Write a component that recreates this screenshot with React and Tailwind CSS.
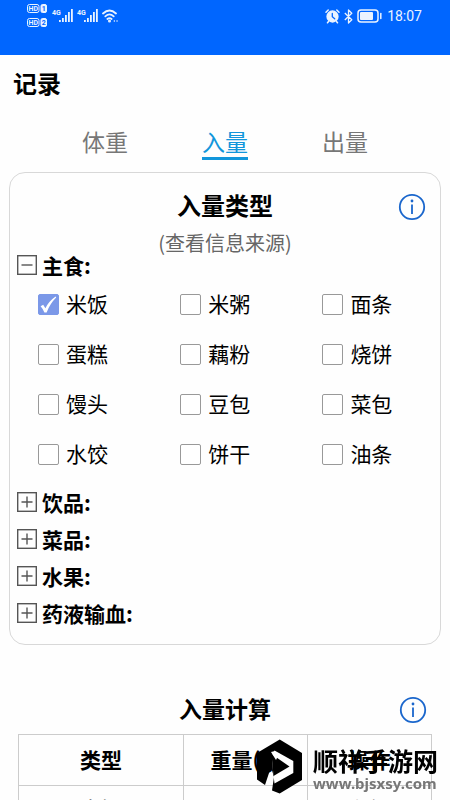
import { useState } from 'react';

const TABS = ['体重', '入量', '出量'];
const STAPLES = ['米饭', '米粥', '面条', '蛋糕', '藕粉', '烧饼', '馒头', '豆包', '菜包', '水饺', '饼干', '油条'];
const GROUPS = ['饮品', '菜品', '水果', '药液输血'];

function Signal() {
  return (
    <svg width="21" height="16" viewBox="0 0 21 16" fill="#eaf3ff">
      <text x="0" y="7" fontSize="7" fontWeight="700" fontFamily="Roboto, sans-serif">4G</text>
      <rect x="7" y="12" width="1.8" height="2" />
      <rect x="10" y="10" width="1.8" height="4" />
      <rect x="13" y="7" width="1.8" height="7" />
      <rect x="16" y="4" width="1.8" height="10" />
      <rect x="19" y="1" width="1.8" height="13" />
    </svg>
  );
}

function HdBadge({ n }) {
  return (
    <svg width="21" height="9" viewBox="0 0 21 9" fill="none" stroke="#eaf3ff" strokeWidth="1">
      <rect x="0.5" y="0.5" width="11.5" height="8" rx="2" />
      <rect x="14" y="0.5" width="5.5" height="8" rx="1.5" fill="#eaf3ff" />
      <g stroke="none" fontSize="7" fontWeight="700" fontFamily="Roboto, sans-serif">
        <text x="1.5" y="7" fill="#eaf3ff">HD</text>
        <text x="14.8" y="7" fill="#0066ff">{n}</text>
      </g>
    </svg>
  );
}

function StatusBar() {
  return (
    <header className="flex h-[55px] items-start justify-between bg-[#0066ff] pr-7 pl-[27px] text-[#eaf3ff]">
      <div className="flex items-center gap-1 pt-1">
        <div className="flex flex-col gap-[5px]">
          <HdBadge n="1" />
          <HdBadge n="2" />
        </div>
        <Signal />
        <Signal />
        <svg width="16" height="14" viewBox="0 0 16 14" fill="none" stroke="#eaf3ff" strokeWidth="1.8" strokeLinecap="round">
          <path d="M1 4.5Q7.5-1.5 14 4.5M3.3 7.3q4.2-3.8 8.4 0M5.4 10q2.1-1.8 4.2 0" />
          <circle cx="7.5" cy="12" r="0.6" fill="#eaf3ff" />
          <path d="M12.3 12h.1M15 12h.1" strokeWidth="1.4" />
        </svg>
      </div>
      <div className="flex items-center gap-1 pt-[7px]">
        <svg width="15" height="15" viewBox="0 0 15 15" fill="none" stroke="#eaf3ff" strokeWidth="1.5" strokeLinecap="round">
          <circle cx="7.5" cy="7.5" r="5.4" fill="#eaf3ff" />
          <path d="M1 3.2 3.2 1M14 3.2 11.8 1M3.5 12.5 2.5 13.8M11.5 12.5l1 1.3" />
          <path d="M7.3 4.5v3.3l2.4 2" stroke="#0066ff" strokeWidth="1.3" />
        </svg>
        <svg width="9" height="15" viewBox="0 0 9 15" fill="none" stroke="#eaf3ff" strokeWidth="1.3" strokeLinejoin="round">
          <path d="M.8 4 7.8 10.8 4.5 14V1L7.8 4.2.8 11" />
        </svg>
        <svg width="26" height="14" viewBox="0 0 26 14" fill="none" stroke="#eaf3ff" strokeWidth="1.5">
          <rect x="1" y="1" width="20" height="12" rx="3" />
          <rect x="3" y="3" width="13" height="8" rx="1" fill="#eaf3ff" stroke="none" />
          <path d="M23.8 4.5v5" strokeLinecap="round" />
        </svg>
        <span className="font-[Roboto,sans-serif] text-[14px] leading-[18px]">18:07</span>
      </div>
    </header>
  );
}

function InfoButton() {
  return (
    <button type="button" aria-label="说明" className="absolute top-0 right-0">
      <svg width="28" height="28" viewBox="0 0 28 28" fill="none" stroke="#1a66cc" strokeWidth="1.8">
        <circle cx="14" cy="14" r="12.2" />
        <path d="M14 11.5V21" />
        <circle cx="14" cy="8" r="1.4" fill="#1a66cc" stroke="none" />
      </svg>
    </button>
  );
}

function GroupToggle({ label, open, onClick }) {
  return (
    <button type="button" aria-expanded={open} onClick={onClick} className="flex h-6 items-center gap-[5px] text-[21px] leading-6 font-bold">
      <svg width="20" height="20" viewBox="0 0 20 20" fill="none" stroke="#555" strokeWidth="1.4">
        <rect x="0.7" y="0.7" width="18.6" height="18.6" />
        <path d={open ? 'M4.5 10h11' : 'M4.5 10h11M10 4.5v11'} />
      </svg>
      <span>{label}:</span>
    </button>
  );
}

function Food({ name, checked, onChange }) {
  return (
    <label className="flex h-[50px] items-center gap-[7px] text-[21px]">
      <span className="relative flex">
        <input
          type="checkbox"
          checked={checked}
          onChange={onChange}
          className="size-[21px] appearance-none rounded-[2px] border border-[#999] bg-white checked:border-[#7b98e8] checked:bg-[#7b98e8]"
        />
        {checked && (
          <svg className="pointer-events-none absolute inset-0" width="21" height="21" viewBox="0 0 21 21" fill="#fff">
            <path d="M2.6 12.3 5.2 10.8 7.4 14.2Q11 7.2 17.6 2.6L18.2 3.4Q12 9.5 8.6 18.4H6.4Q5 15 2.6 12.3Z" />
          </svg>
        )}
      </span>
      {name}
    </label>
  );
}

function Watermark() {
  return (
    <div className="fixed right-3 bottom-[6px] flex items-center gap-[10px]">
      <svg width="46" height="55" viewBox="0 0 46 55">
        <path d="M22.7.5 45 14V41L22.7 54.5 15 51.5 17 38 14 28 8 46 0 40.5V14Z" fill="#000" />
        <path d="M17.5 11.5 36.3 22V34L17.5 44.5 16 32 15 17Z" fill="#fff" />
        <path d="M14.5 15 32.5 27.5 16.5 37Z" fill="#000" />
        <path d="M14 13 18 12 20.5 18 19 21Z" fill="#fff" />
      </svg>
      <div className="pt-1">
        <div className="text-[25px] leading-[28px] font-bold">顺祥手游网</div>
        <div className="font-['Noto_Sans',sans-serif] text-[15px] leading-[18px] font-bold text-[#777]">www.bjsxsy.com</div>
      </div>
    </div>
  );
}

export default function App() {
  const [tab, setTab] = useState('入量');
  const [picked, setPicked] = useState(['米饭']);
  const [open, setOpen] = useState(['主食']);

  const flip = (list, v) => (list.includes(v) ? list.filter((x) => x !== v) : [...list, v]);

  return (
    <div className="h-screen overflow-hidden bg-[#fefefe] font-['Noto_Sans_CJK_SC',sans-serif] text-black">
      <StatusBar />
      <h1 className="px-[13px] pt-3 text-[24px] leading-8 font-bold">记录</h1>

      <nav className="mx-[45px] mt-[26px] grid grid-cols-3 justify-items-center">
        {TABS.map((t) => (
          <button
            key={t}
            type="button"
            onClick={() => setTab(t)}
            className={`border-b-3 text-[23px] leading-[32px] ${t === tab ? 'border-[#1296db] text-[#1296db]' : 'border-transparent text-[#777]'}`}
          >
            {t}
          </button>
        ))}
      </nav>

      <section className="mx-[9px] mt-3 rounded-2xl border border-[#d8d8d8] px-[7px] pt-5 pb-[19px]">
        <div className="relative mx-[7px] text-center">
          <h2 className="text-[24px] leading-6 font-bold">入量类型</h2>
          <InfoButton />
        </div>
        <a href="#source" className="mx-auto mt-4 block w-fit text-[20px] leading-5 text-[#666]">
          (查看信息来源)
        </a>
        <GroupToggle label="主食" open={open.includes('主食')} onClick={() => setOpen(flip(open, '主食'))} />
        {open.includes('主食') && (
          <div className="mt-[2px] -mb-[2px] grid grid-cols-[36%_36%_1fr] pl-[21px]">
            {STAPLES.map((s) => (
              <Food key={s} name={s} checked={picked.includes(s)} onChange={() => setPicked(flip(picked, s))} />
            ))}
          </div>
        )}
        <div className="mt-[13px] flex flex-col items-start gap-[13px]">
          {GROUPS.map((g) => (
            <GroupToggle key={g} label={g} open={open.includes(g)} onClick={() => setOpen(flip(open, g))} />
          ))}
        </div>
      </section>

      <section className="mx-[18px] mt-[51px]">
        <div className="relative mx-[5px] text-center">
          <h2 className="text-[23px] leading-6 font-bold">入量计算</h2>
          <InfoButton />
        </div>
        <table className="mt-[14px] w-full table-fixed border-collapse text-center text-[21px]">
          <thead>
            <tr className="h-[51px]">
              <th className="w-2/5 border border-[#ccc]">类型</th>
              <th className="border border-[#ccc]">重量(g)</th>
              <th className="border border-[#ccc]">操作</th>
            </tr>
          </thead>
          <tbody>
            <tr className="h-[45px] leading-6">
              <td className="border border-[#ccc]">米饭</td>
              <td className="border border-[#ccc]" />
              <td className="border border-[#ccc] pr-5 text-[#666]">删除</td>
            </tr>
          </tbody>
        </table>
      </section>
      <Watermark />
    </div>
  );
}
